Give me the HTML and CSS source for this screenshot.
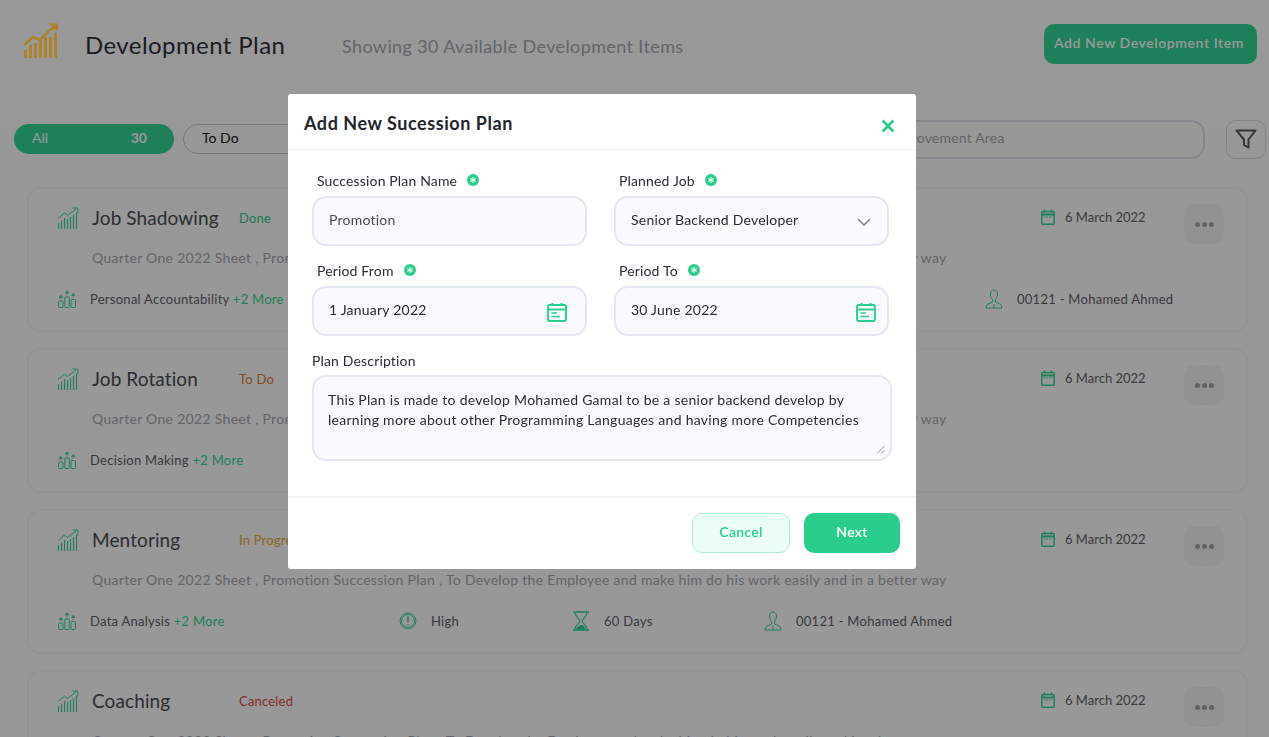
FILE: index.html
```html
<!DOCTYPE html>
<html lang="en">
<head>
<meta charset="utf-8">
<title>Development Plan</title>
<link rel="stylesheet" href="styles.css">
</head>
<body>
<svg class="defs" width="0" height="0" aria-hidden="true">
  <symbol id="i-chart" viewBox="0 0 22 22">
    <path d="M1 11.500 L7.500 6 L10.500 8.500 L19 2" fill="none" stroke="currentColor" stroke-width="1"/>
    <path d="M15.500 1H20.800V6.500" fill="none" stroke="currentColor" stroke-width="1"/>
    <path d="M1.500 16v6M4.500 13.500v8.500M7.500 11v11M10.500 12v10M13.500 10v12M16.500 8v14M19.500 5.500v16.500" fill="none" stroke="currentColor" stroke-width="1.100"/>
  </symbol>
  <symbol id="i-skill" viewBox="0 0 18 18">
    <rect x="0.600" y="11" width="4.500" height="6.500" rx="1" fill="none" stroke="currentColor"/>
    <rect x="6.800" y="7" width="4.500" height="10.500" rx="1" fill="none" stroke="currentColor"/>
    <rect x="13" y="9.500" width="4.500" height="8" rx="1" fill="none" stroke="currentColor"/>
    <path d="M2.800 9.500V7M1 7.500 2.800 5.300 4.600 7.500ZM9 5.500V3M7.200 3 9 .8 10.800 3ZM15.200 8V5.500M13.400 5.500 15.200 3.300 17 5.500Z" fill="currentColor" stroke="currentColor" stroke-width=".7"/>
  </symbol>
  <symbol id="i-cal" viewBox="0 0 20 20">
    <rect x="1" y="3" width="18" height="16" rx="1.500" fill="none" stroke="currentColor" stroke-width="1.900"/>
    <path d="M1 7.500H19" stroke="currentColor" stroke-width="1.900"/>
    <path d="M5.500 1v3M14.500 1v3" stroke="currentColor" stroke-width="1.900"/>
    <path d="M4.500 11H10M4.500 14.500H13" stroke="currentColor" stroke-width="1.500"/>
  </symbol>
  <symbol id="i-cal-s" viewBox="0 0 14 16">
    <rect x="0.800" y="2.500" width="12.400" height="12.700" rx="1" fill="none" stroke="currentColor" stroke-width="1.500"/>
    <path d="M1 5.500H13" stroke="currentColor" stroke-width="2"/>
    <path d="M3.500 0.500v3M10.500 0.500v3" stroke="currentColor" stroke-width="1.400"/>
    <path d="M3 8H11" stroke="currentColor" stroke-width="1.200" stroke-dasharray="1.500 1"/>
  </symbol>
  <symbol id="i-user" viewBox="0 0 18 20">
    <path d="M9 1C6.500 1 5.200 3 5.500 6c.2 2 1 3.500 2 4.500v2.500L2 15.500 1 19H17L16 15.500 10.500 13v-2.500c1-1 1.800-2.500 2-4.500C12.800 3 11.500 1 9 1Z" fill="none" stroke="currentColor" stroke-width="1"/>
    <path d="M9 15v4" stroke="currentColor" stroke-width="1"/>
  </symbol>
  <symbol id="i-alert" viewBox="0 0 20 20">
    <circle cx="10" cy="10" r="8.800" fill="none" stroke="currentColor" stroke-width="1.100"/>
    <circle cx="10" cy="10" r="7.200" fill="none" stroke="currentColor" stroke-width="1.100"/>
    <path d="M10 5v6.500" stroke="currentColor" stroke-width="1.700"/>
    <circle cx="10" cy="14" r="1" fill="currentColor"/>
  </symbol>
  <symbol id="i-hour" viewBox="0 0 18 20">
    <path d="M1 1H17M1 19H17" stroke="currentColor" stroke-width="1.300"/>
    <path d="M3 1.500C3 6 8 8 8 10S3 14 3 18.500M15 1.500C15 6 10 8 10 10S15 14 15 18.500" fill="none" stroke="currentColor" stroke-width="1.100"/>
    <path d="M4 18.500C4.500 16 7.500 14.500 9 14S13.500 16 14 18.500Z" fill="currentColor"/>
  </symbol>
  <symbol id="i-req" viewBox="0 0 12 12">
    <circle cx="6" cy="6" r="6" fill="currentColor"/>
    <path d="M6 2.900v6.200M3.300 4.450l5.400 3.100M8.700 4.450l-5.400 3.100" stroke="#e4faf0" stroke-width="1.200"/>
  </symbol>
</svg>

<div class="page">
  <header class="top">
    <svg class="logo" viewBox="0 0 36 36" width="36" height="36" aria-hidden="true">
      <path d="M1 22 L10 14 L17 17 L27 7 L32 4" fill="none" stroke="#ad822a" stroke-width="2.600"/>
      <path d="M26 0.500H35V9Z" fill="#ad822a"/>
      <path d="M2.500 27v8M7.500 22v13M12.500 20v15M17.500 18v17M22.500 14v21M27.500 14v21M32.500 10v25" stroke="#ad822a" stroke-width="3" fill="none"/>
    </svg>
    <h1 class="title">Development Plan</h1>
    <p class="showing">Showing 30 Available Development Items</p>
    <button class="add-btn">Add New Development Item</button>
  </header>

  <section class="filters">
    <div class="pill pill-on"><span>All</span><b>30</b></div>
    <div class="pill pill-off"><span>To Do</span></div>
    <div class="search"><span>Search by Improvement Area</span></div>
    <button class="filter-btn" aria-label="Filter">
      <svg viewBox="0 0 24 24" width="24" height="24"><path d="M2.500 3.500H21.500L14.500 12.500V20.500L10 18V12.500Z" fill="none" stroke="#58595f" stroke-width="2" stroke-linejoin="round"/></svg>
    </button>
  </section>

  <section class="cards">
    <article class="card">
      <div class="card-head">
        <svg class="ico-chart"><use href="#i-chart"/></svg>
        <h2 class="card-title">Job Shadowing</h2>
        <span class="status st-done">Done</span>
        <span class="date"><svg class="ico-date"><use href="#i-cal-s"/></svg>6 March 2022</span>
        <button class="dots" aria-label="More"><i></i><i></i><i></i></button>
      </div>
      <p class="desc">Quarter One 2022 Sheet , Promotion Succession Plan , To Develop the Employee and make him do his work easily and in a better way</p>
      <div class="meta meta-wide">
        <div class="mi"><svg class="ico-skill"><use href="#i-skill"/></svg><span>Personal Accountability <em>+2 More</em></span></div>
        <div class="mi"><svg class="ico-m"><use href="#i-alert"/></svg><span>High</span></div>
        <div class="mi"><svg class="ico-m"><use href="#i-hour"/></svg><span>60 Days</span></div>
        <div class="mi"><svg class="ico-m"><use href="#i-user"/></svg><span>00121 - Mohamed Ahmed</span></div>
      </div>
    </article>

    <article class="card">
      <div class="card-head">
        <svg class="ico-chart"><use href="#i-chart"/></svg>
        <h2 class="card-title">Job Rotation</h2>
        <span class="status st-todo">To Do</span>
        <span class="date"><svg class="ico-date"><use href="#i-cal-s"/></svg>6 March 2022</span>
        <button class="dots" aria-label="More"><i></i><i></i><i></i></button>
      </div>
      <p class="desc">Quarter One 2022 Sheet , Promotion Succession Plan , To Develop the Employee and make him do his work easily and in a better way</p>
      <div class="meta meta-narrow">
        <div class="mi"><svg class="ico-skill"><use href="#i-skill"/></svg><span>Decision Making <em>+2 More</em></span></div>
        <div class="mi"><svg class="ico-m"><use href="#i-alert"/></svg><span>High</span></div>
        <div class="mi"><svg class="ico-m"><use href="#i-hour"/></svg><span>60 Days</span></div>
        <div class="mi"><svg class="ico-m"><use href="#i-user"/></svg><span>00121 - Mohamed Ahmed</span></div>
      </div>
    </article>

    <article class="card">
      <div class="card-head">
        <svg class="ico-chart"><use href="#i-chart"/></svg>
        <h2 class="card-title">Mentoring</h2>
        <span class="status st-prog">In Progress</span>
        <span class="date"><svg class="ico-date"><use href="#i-cal-s"/></svg>6 March 2022</span>
        <button class="dots" aria-label="More"><i></i><i></i><i></i></button>
      </div>
      <p class="desc">Quarter One 2022 Sheet , Promotion Succession Plan , To Develop the Employee and make him do his work easily and in a better way</p>
      <div class="meta">
        <div class="mi"><svg class="ico-skill"><use href="#i-skill"/></svg><span>Data Analysis <em>+2 More</em></span></div>
        <div class="mi"><svg class="ico-m"><use href="#i-alert"/></svg><span>High</span></div>
        <div class="mi"><svg class="ico-m"><use href="#i-hour"/></svg><span>60 Days</span></div>
        <div class="mi"><svg class="ico-m"><use href="#i-user"/></svg><span>00121 - Mohamed Ahmed</span></div>
      </div>
    </article>

    <article class="card">
      <div class="card-head">
        <svg class="ico-chart"><use href="#i-chart"/></svg>
        <h2 class="card-title">Coaching</h2>
        <span class="status st-cancel">Canceled</span>
        <span class="date"><svg class="ico-date"><use href="#i-cal-s"/></svg>6 March 2022</span>
        <button class="dots" aria-label="More"><i></i><i></i><i></i></button>
      </div>
      <p class="desc">Quarter One 2022 Sheet , Promotion Succession Plan , To Develop the Employee and make him do his work easily and in a better way</p>
    </article>
  </section>
</div>

<div class="overlay">
  <div class="modal">
    <div class="modal-head">
      <h3 class="modal-title">Add New Sucession Plan</h3>
      <button class="close" aria-label="Close">
        <svg viewBox="0 0 14 14" width="14" height="14"><path d="M1.500 1.500 12.500 12.500M12.500 1.500 1.500 12.500" stroke="#2bcd8d" stroke-width="2.600"/></svg>
      </button>
    </div>
    <div class="modal-body">
      <div class="form-grid">
        <div class="field">
          <label class="lbl">Succession Plan Name <svg class="req"><use href="#i-req"/></svg></label>
          <div class="input muted"><span>Promotion</span></div>
        </div>
        <div class="field">
          <label class="lbl">Planned Job <svg class="req"><use href="#i-req"/></svg></label>
          <div class="input"><span>Senior Backend Developer</span>
            <svg class="chev" viewBox="0 0 14 8" width="14" height="8"><path d="M1 1 7 7 13 1" fill="none" stroke="#7d8088" stroke-width="1.600"/></svg>
          </div>
        </div>
        <div class="field">
          <label class="lbl">Period From <svg class="req"><use href="#i-req"/></svg></label>
          <div class="input input-from"><span>1 January 2022</span> <svg class="cal"><use href="#i-cal"/></svg></div>
        </div>
        <div class="field">
          <label class="lbl">Period To <svg class="req"><use href="#i-req"/></svg></label>
          <div class="input"><span>30 June 2022</span> <svg class="cal"><use href="#i-cal"/></svg></div>
        </div>
      </div>
      <label class="lbl lbl-desc" for="plan">Plan Description</label>
      <div class="area-wrap">
        <textarea id="plan" class="area">This Plan is made to develop Mohamed Gamal to be a senior backend develop by
learning more about other Programming Languages and having more Competencies</textarea>
        <svg class="grip" viewBox="0 0 9 9" width="9" height="9"><path d="M8.500 1 1 8.500M8.500 5 5 8.500" stroke="#9a9ca6" stroke-width="1"/></svg>
      </div>
    </div>
    <div class="modal-foot">
      <button class="btn btn-cancel">Cancel</button>
      <button class="btn btn-next">Next</button>
    </div>
  </div>
</div>
</body>
</html>
```
FILE: styles.css
```css
* { box-sizing: border-box; }
html, body { margin: 0; height: 100%; }
body {
  background: linear-gradient(#ffffff 0, #fbfefb 170px);
  color: #23242c;
  font-family: Lato, "Open Sans", sans-serif;
  overflow: hidden;
}
.defs { display: block; height: 0; }
button { font-family: inherit; cursor: pointer; }
h1, h2, h3, p { margin: 0; font-weight: 400; }

.page { height: 737px; overflow: hidden; }

/* header */
.top {
  display: flex;
  align-items: center;
  height: 93px;
  padding: 0 12px 0 23px;
}
.logo { position: relative; z-index: 20; flex: none; margin-top: -11px; }
.title { font-size: 24px; margin: -4px 0 0 26px; width: 257px; letter-spacing: .42px; color: #30313b; }
.showing { font-size: 18px; color: #a5a7ae; flex: 1; letter-spacing: .38px; margin-top: -2px; }
.add-btn {
  width: 213px; height: 40px;
  margin-top: -6px;
  padding: 0 3px 2px 0;
  background: #31d596;
  color: #fff;
  border: 0;
  border-radius: 10px;
  font-size: 14px;
  font-weight: 600;
  letter-spacing: .58px;
}

/* filters */
.filters {
  display: flex;
  align-items: center;
  height: 40px;
  margin-top: 26px;
  padding: 0 3px 0 14px;
}
.pill {
  height: 30px; width: 160px;
  border-radius: 15px;
  display: flex;
  align-items: center;
  justify-content: space-between;
  font-size: 14px;
  padding: 0 27px 3px 18px;
}
.pill-on { background: #32d595; color: #fff; }
.pill-on b { font-weight: 700; }
.pill-off { margin-left: 9px; border: 1px solid #c8c8cc; width: 200px; color: #151519; }
.search {
  flex: 1;
  margin-left: 40px;
  height: 39px;
  border: 2px solid #dde0e8;
  border-radius: 14px;
  font-size: 14px;
  color: #a5a7ae;
  display: flex;
  align-items: center;
  padding: 0 0 4px 398px;
  letter-spacing: .2px;
}
.filter-btn {
  width: 40px; height: 39px;
  margin-left: 21px;
  border: 1px solid #d8dae2;
  border-radius: 10px;
  background: transparent;
  display: flex; align-items: center; justify-content: center;
  padding: 0;
}

/* cards */
.cards {
  display: flex;
  flex-direction: column;
  gap: 16px;
  margin: 28px 21px 0 27px;
}
.card {
  flex: none;
  height: 145px;
  background: #fcfdfc;
  border: 2px solid #f3f5f3;
  border-radius: 14px;
  padding: 15px 22px 0 28px;
}
.card-head { display: flex; align-items: flex-start; height: 40px; }
.ico-chart { width: 22px; height: 22px; color: #32d595; flex: none; margin-top: 3px; }
.card-title { font-size: 19px; line-height: 28px; margin-left: 13px; width: 147px; letter-spacing: .1px; color: #4b4c54; }
.status { font-size: 13px; line-height: 28px; letter-spacing: .2px; flex: 1; }
.st-done { color: #32c98c; }
.st-todo { color: #e07a3a; }
.st-prog { color: #e3ac3c; }
.st-cancel { color: #e24c4c; }
.date { display: flex; align-items: center; font-size: 13px; line-height: 26px; color: #5f6068; width: 143px; }
.ico-date { width: 14px; height: 16px; margin-right: 10px; color: #32d595; }
.dots {
  width: 40px; height: 40px;
  border: 0;
  border-radius: 10px;
  background: #f3f4f6;
  display: flex; align-items: center; justify-content: center; gap: 2px;
  padding: 0;
}
.dots i { width: 5px; height: 5px; border-radius: 50%; background: #a3a4aa; }
.desc { font-size: 14px; color: #a5a7ae; margin: 4px 0 0 35px; letter-spacing: .3px; white-space: nowrap; line-height: 20px; }
.meta {
  display: grid;
  grid-template-columns: 341px 173px 192px auto;
  margin: 21px 0 0 1px;
  font-size: 13px;
  color: #5f6068;
  letter-spacing: .27px;
}
.meta-wide { grid-template-columns: 430px 240px 257px auto; }
.meta-narrow { grid-template-columns: 300px 160px 170px auto; }
.mi { display: flex; align-items: center; white-space: nowrap; height: 20px; }
.mi em { font-style: normal; color: #32d595; }
.ico-skill { width: 18px; height: 18px; color: #32d595; margin-right: 14px; flex: none; }
.ico-m { width: 18px; height: 20px; color: #32d595; margin-right: 14px; flex: none; }

/* modal */
.overlay {
  position: fixed;
  inset: 0;
  background: rgba(0,0,0,.4);
  padding: 94px 0 0 288px;
  z-index: 10;
}
.modal {
  width: 628px;
  height: 475px;
  background: #fff;
  border-radius: 3px;
  display: flex;
  flex-direction: column;
}
.modal-head {
  display: flex;
  align-items: center;
  justify-content: space-between;
  height: 56px;
  padding: 0 21px 0 16px;
  border-bottom: 1px solid #eef0f4;
}
.modal-title { font-size: 18px; font-weight: 700; color: #23242c; letter-spacing: .55px; margin-top: 2px; }
.close { border: 0; background: none; padding: 0; display: flex; margin-top: 8px; }
.modal-body { flex: 1; padding: 20px 24px 0; }
.form-grid { display: grid; grid-template-columns: 275px 275px; column-gap: 27px; row-gap: 14px; }
.lbl { display: flex; align-items: center; font-size: 14px; height: 20px; padding-left: 5px; color: #2b2c34; letter-spacing: .16px; }
.req { width: 12px; height: 12px; color: #2bcd8d; margin-left: 10px; margin-top: -1px; }
.input {
  display: flex; align-items: center; justify-content: space-between;
  height: 50px;
  margin-top: 6px;
  padding: 0 11px 0 15px;
  background: #f9fafd;
  border: 2px solid #e3e7ef;
  border-radius: 14px;
  font-size: 14px;
  letter-spacing: .22px;
  color: #2b2c34;
}
.input span { margin-top: -3px; }
.input-from { padding-right: 18px; }
.muted { color: #4a4b53; }
.chev { margin-right: 5px; margin-top: 2px; }
.cal { width: 20px; height: 20px; color: #2bcd8d; margin-top: 1px; }
.lbl-desc { padding-left: 0; margin-top: 14px; }
.area-wrap { position: relative; margin-top: 5px; }
.area {
  display: block;
  width: 580px; height: 86px;
  padding: 13px 14px;
  background: #f9fafd;
  border: 2px solid #e3e7ef;
  border-radius: 14px;
  font: 14px/20px Lato, "Open Sans", sans-serif;
  letter-spacing: .28px;
  color: #2b2c34;
  outline: none;
  overflow: hidden;
  resize: none;
}
.grip { position: absolute; right: 7px; bottom: 7px; }
.modal-foot {
  display: flex;
  justify-content: flex-end;
  gap: 14px;
  height: 73px;
  padding: 15px 16px;
  border-top: 2px solid #f0f2f6;
}
.btn { height: 40px; padding: 0 0 4px; border-radius: 10px; font-size: 14px; font-weight: 600; letter-spacing: .3px; }
.btn-cancel { width: 98px; background: #edfef8; border: 1px solid #a9eed3; color: #2bcd8d; }
.btn-next { width: 96px; background: #2bcd8d; border: 0; color: #fff; }
```
